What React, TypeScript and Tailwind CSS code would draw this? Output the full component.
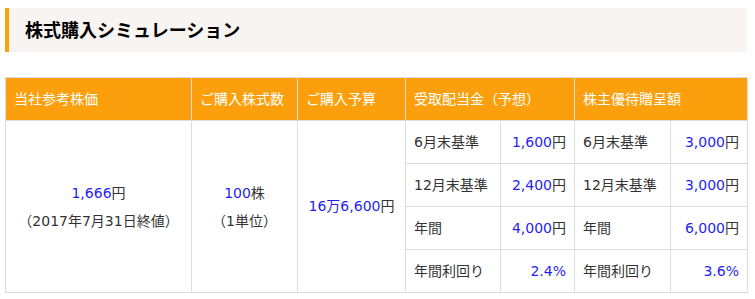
import React from 'react';

const font = { fontFamily: '"DejaVu Sans", "Noto Sans CJK JP", sans-serif' };

const Num: React.FC<{ children: React.ReactNode }> = ({ children }) => (
  <span className="text-[#1f1ff5]">{children}</span>
);

const rows = [
  { d: '6月末基準', dv: '1,600', dUnit: '円', y: '6月末基準', yv: '3,000', yUnit: '円' },
  { d: '12月末基準', dv: '2,400', dUnit: '円', y: '12月末基準', yv: '3,000', yUnit: '円' },
  { d: '年間', dv: '4,000', dUnit: '円', y: '年間', yv: '6,000', yUnit: '円' },
  { d: '年間利回り', dv: '2.4%', dUnit: '', y: '年間利回り', yv: '3.6%', yUnit: '' },
];

const cell = 'border border-[#dddddd] h-[43px] px-2 align-middle';

const App: React.FC = () => {
  return (
    <div className="min-h-screen bg-white pl-[5px] pr-[8px] pt-2 text-[#333333]" style={font}>
      {/* Title */}
      <div className="h-[44px] flex items-center border-l-4 border-[#fba00c] bg-[#f8f4f2] pl-4">
        <h2 className="text-[18px] font-bold text-black">株式購入シミュレーション</h2>
      </div>

      {/* Simulation table */}
      <table className="mt-[25px] w-[742px] table-fixed border-collapse text-[14px]">
        <colgroup>
          <col className="w-[186px]" />
          <col className="w-[106px]" />
          <col className="w-[108px]" />
          <col className="w-[95px]" />
          <col className="w-[74px]" />
          <col className="w-[96px]" />
          <col className="w-[77px]" />
        </colgroup>
        <thead>
          <tr className="bg-[#fba00c] text-white">
            <th className={`${cell} text-left font-normal`}>当社参考株価</th>
            <th className={`${cell} text-left font-normal`}>ご購入株式数</th>
            <th className={`${cell} text-left font-normal`}>ご購入予算</th>
            <th colSpan={2} className={`${cell} text-left font-normal`}>受取配当金（予想）</th>
            <th colSpan={2} className={`${cell} text-left font-normal`}>株主優待贈呈額</th>
          </tr>
        </thead>
        <tbody>
          {rows.map((r, i) => (
            <tr key={i}>
              {i === 0 && (
                <>
                  <td rowSpan={4} className={`${cell} text-center leading-[28px]`}>
                    <div><Num>1,666</Num>円</div>
                    <div>（2017年7月31日終値）</div>
                  </td>
                  <td rowSpan={4} className={`${cell} text-center leading-[28px]`}>
                    <div><Num>100</Num>株</div>
                    <div>（1単位）</div>
                  </td>
                  <td rowSpan={4} className={`${cell} text-center`}>
                    <Num>16万6,600</Num>円
                  </td>
                </>
              )}
              <td className={`${cell} whitespace-nowrap`}>{r.d}</td>
              <td className={`${cell} text-right whitespace-nowrap`}>
                <Num>{r.dv}</Num>{r.dUnit}
              </td>
              <td className={`${cell} whitespace-nowrap`}>{r.y}</td>
              <td className={`${cell} text-right whitespace-nowrap`}>
                <Num>{r.yv}</Num>{r.yUnit}
              </td>
            </tr>
          ))}
        </tbody>
      </table>
    </div>
  );
};

export default App;
